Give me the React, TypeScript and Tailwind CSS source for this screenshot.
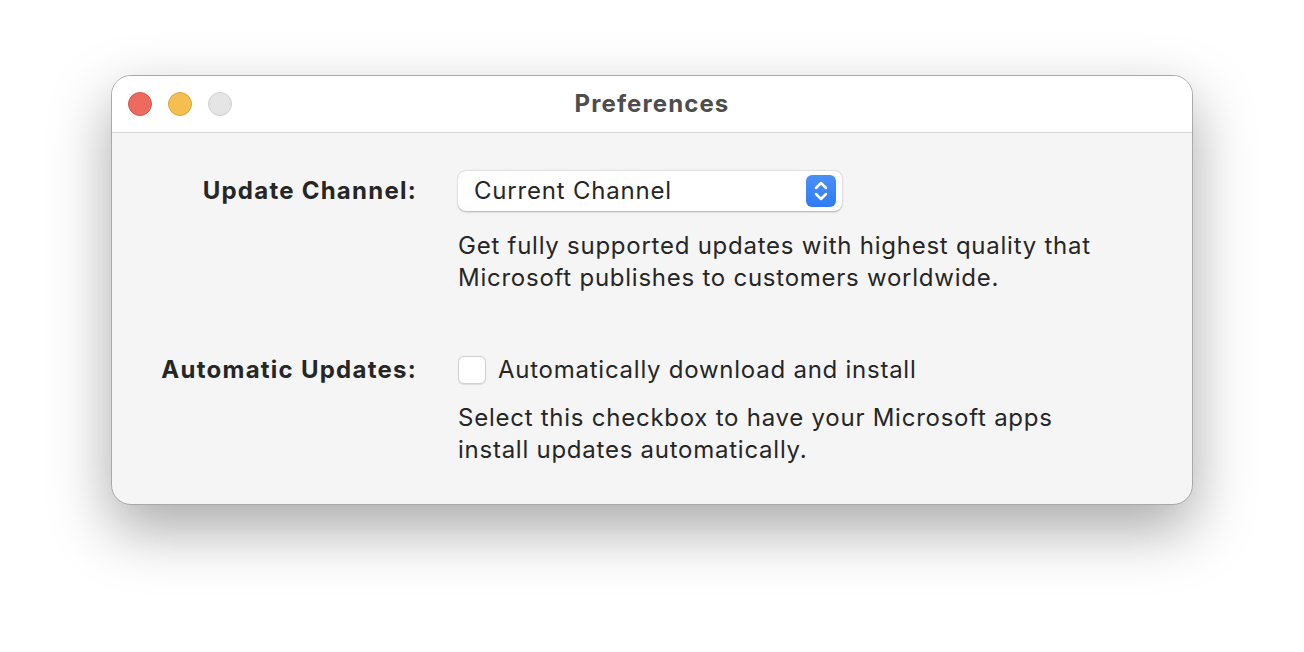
import React from "react";

const Stepper = () => (
  <div className="w-[30px] h-[32px] rounded-[6px] bg-gradient-to-b from-[#4a90f8] to-[#2f7bf5] flex items-center justify-center">
    <svg width="18" height="26" viewBox="0 0 18 26" fill="none">
      <path d="M4 10 L9 5 L14 10" stroke="white" strokeWidth="2.5" strokeLinecap="round" strokeLinejoin="round" />
      <path d="M4 16 L9 21 L14 16" stroke="white" strokeWidth="2.5" strokeLinecap="round" strokeLinejoin="round" />
    </svg>
  </div>
);

const App = () => {
  return (
    <div className="w-[1304px] h-[652px] bg-white pt-[75px] pl-[111px] font-['Inter','Liberation_Sans',sans-serif]">
      <div className="w-[1082px] h-[430px] rounded-[20px] bg-[#f5f5f5] border border-[#a9a9a9] shadow-[0_24px_60px_rgba(0,0,0,0.34)] overflow-hidden flex flex-col">
        {/* Title bar */}
        <div className="relative h-[57px] bg-white border-b border-[#d4d4d4] flex items-center shrink-0">
          <div className="flex gap-[16px] pl-[16px]">
            <span className="w-[24px] h-[24px] rounded-full bg-[#ed6a5e] border border-[#d4574c]" />
            <span className="w-[24px] h-[24px] rounded-full bg-[#f5bf4f] border border-[#d9a53c]" />
            <span className="w-[24px] h-[24px] rounded-full bg-[#e5e5e5] border border-[#cfcfcf]" />
          </div>
          <div className="absolute inset-0 flex items-center justify-center text-[24px] font-bold text-[#4d4d4d] tracking-[1.1px]">
            Preferences
          </div>
        </div>

        {/* Body */}
        <div className="grid grid-cols-[305px_1fr] gap-x-[41px] pt-[38px] text-[24px] text-[#262626] tracking-[0.75px]">
          <div className="h-[40px] flex items-center justify-end font-bold tracking-[1.25px]">Update Channel:</div>
          <div>
            <div className="w-[384px] h-[40px] bg-white rounded-[8px] shadow-[0_0.5px_2px_rgba(0,0,0,0.3)] flex items-center justify-between pl-[16px] pr-[6px]">
              <span className="tracking-[0.8px]">Current Channel</span>
              <Stepper />
            </div>
            <p className="mt-[19px] leading-[32px] w-[680px]">
              Get fully supported updates with highest quality that Microsoft publishes to customers worldwide.
            </p>
          </div>

          <div className="mt-[60px] h-[32px] flex items-center justify-end font-bold tracking-[1.25px]">Automatic Updates:</div>
          <div className="mt-[60px]">
            <div className="h-[32px] flex items-center gap-[12px]">
              <span className="w-[28px] h-[28px] rounded-[6px] bg-white border border-[#d0d0d0] shadow-[0_0.5px_1px_rgba(0,0,0,0.1)]" />
              <span>Automatically download and install</span>
            </div>
            <p className="mt-[16px] leading-[32px] w-[640px]">
              Select this checkbox to have your Microsoft apps install updates automatically.
            </p>
          </div>
        </div>
      </div>
    </div>
  );
};

export default App;
